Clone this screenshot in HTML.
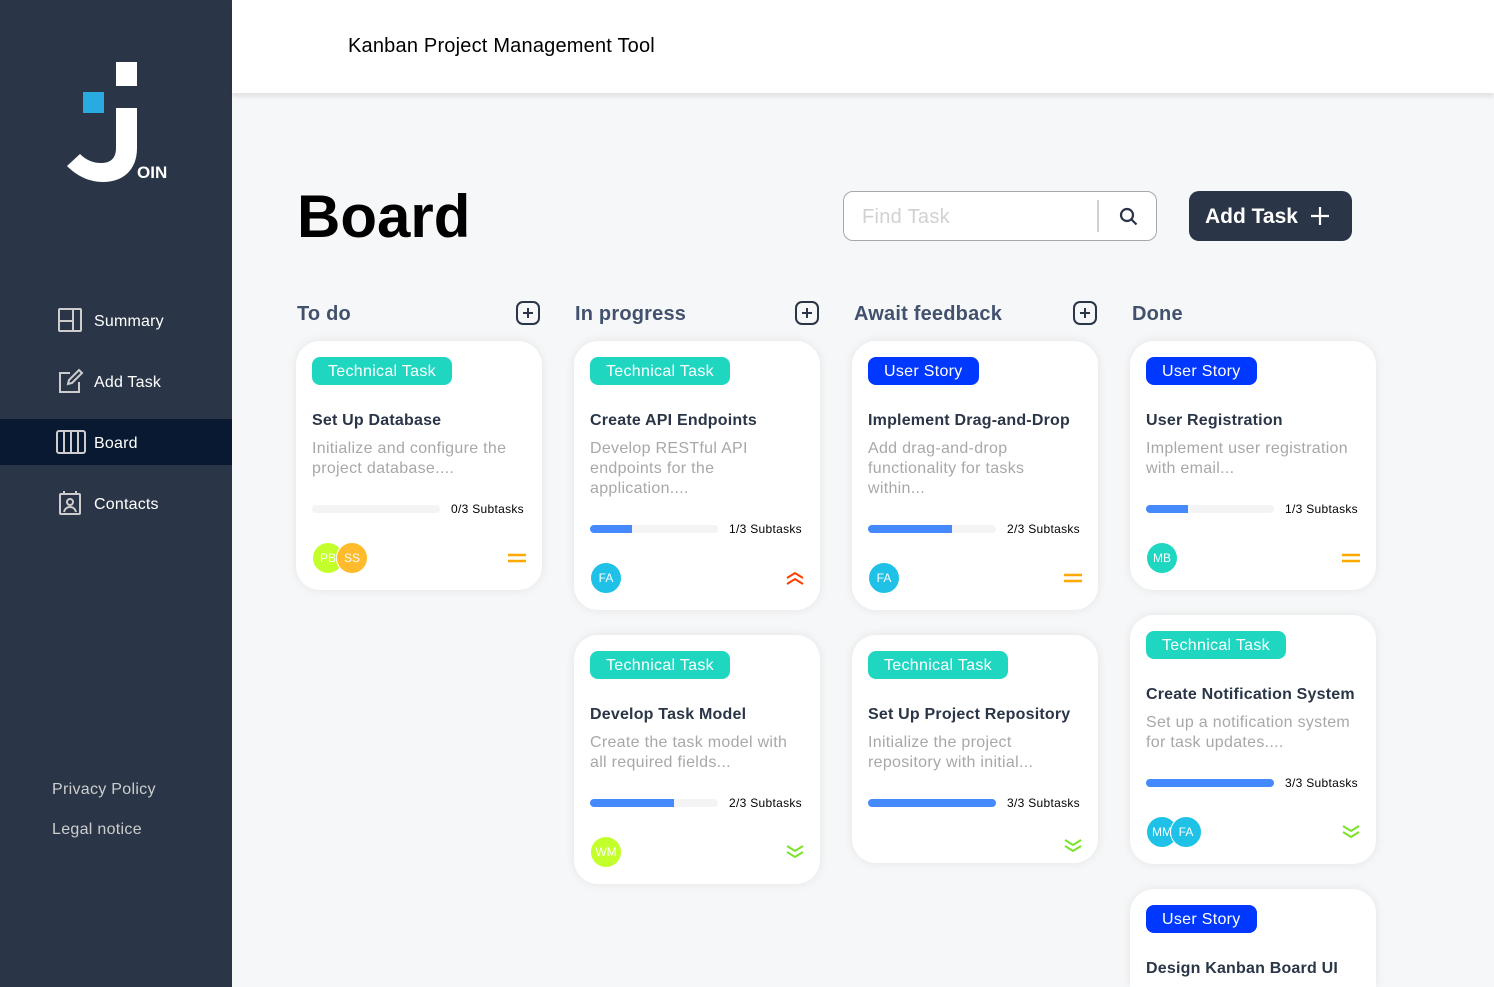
<!DOCTYPE html>
<html style="overflow:hidden;width:1494px;height:987px"><head><meta charset="utf-8"><style>
*{box-sizing:border-box;margin:0;padding:0}
body{width:1494px;height:987px;overflow:hidden;background:#f6f7f8;font-family:"Liberation Sans",sans-serif;position:relative}
.side{position:absolute;left:0;top:0;width:232px;height:987px;background:#2a3647}
.nav{position:absolute;left:0;width:232px;height:46px;display:flex;align-items:center;color:#fff;font-size:16px}
.nav svg{position:absolute;left:56px}
.nav span{position:absolute;left:94px;top:16px;letter-spacing:.2px}
.nav.act{background:#091931}
.foot{position:absolute;left:52px;color:#cdcdcd;font-size:16px;letter-spacing:.3px}
.top{position:absolute;left:232px;top:0;width:1262px;height:93px;background:#fff;box-shadow:0 4px 4px rgba(0,0,0,.08)}
.top span{position:absolute;left:116px;top:35px;font-size:20px;color:#000;letter-spacing:.2px}
h1{position:absolute;left:297px;top:182px;font-size:60px;font-weight:700;color:#000}
.search{position:absolute;left:843px;top:191px;width:314px;height:50px;border:1px solid #a8a8a8;border-radius:10px;background:#fff}
.search span{position:absolute;left:18px;top:14px;font-size:20px;color:#d1d1d1;letter-spacing:.3px}
.search i{position:absolute;left:253px;top:8px;width:2px;height:32px;background:#d1d1d1}
.btn{position:absolute;left:1189px;top:191px;width:163px;height:50px;background:#2a3647;border-radius:10px;color:#fff;font-size:21px;font-weight:700}
.btn span{position:absolute;left:16px;top:14px}
.colh{position:absolute;top:303px;font-size:20px;font-weight:700;color:#42526e;letter-spacing:.2px}
.plus{position:absolute;top:301px;width:24px;height:24px}
.card{position:absolute;width:246px;background:#fff;border-radius:24px;padding:16px;box-shadow:0 0 10px rgba(0,0,0,.08)}
.tag{display:inline-block;height:28px;line-height:30px;padding:0 16px;border-radius:8px;color:#fff;font-size:16px;letter-spacing:.3px}
.tt{background:#1fd7c1}.us{background:#0038ff}
.ti{margin-top:24px;padding-top:2px;height:20px;font-size:16px;font-weight:700;color:#2a3647;line-height:20px;letter-spacing:.2px;white-space:nowrap}
.de{margin-top:8px;padding-top:2px;font-size:16px;color:#a8a8a8;line-height:20px;letter-spacing:.3px;white-space:nowrap}
.pr{margin-top:22px;height:16px;display:flex;align-items:center}
.bar{width:128px;height:8px;border-radius:8px;background:#f4f4f4;overflow:hidden}
.bar b{display:block;height:8px;background:#4589ff}
.pr span{margin-left:11px;font-size:12px;color:#000;letter-spacing:.3px}
.ft{margin-top:25px;height:32px;display:flex;align-items:center;justify-content:space-between}
.av{display:flex}
.av i{width:32px;height:32px;border-radius:50%;color:#fff;font-size:12px;font-style:normal;display:flex;align-items:center;justify-content:center;border:1px solid #fff}
.av i+i{margin-left:-8px}
</style></head><body>
<div class="side">
<svg style="position:absolute;left:0;top:0" width="232" height="200">
<rect x="116" y="62" width="21" height="24" fill="#fff"/>
<rect x="83" y="92" width="21" height="21" fill="#29abe2"/>
<path d="M116 108h21v40c0 22-14 34-34 34c-14 0-26-6-36-16l13-12c6 6 13 9 21 9c10 0 15-5 15-15z" fill="#fff"/>
<text x="137" y="178" fill="#fff" font-size="17" font-weight="700" font-family="Liberation Sans">OIN</text>
</svg>
<div class="nav" style="top:297px"><svg width="28" height="28" viewBox="0 0 28 28" fill="none" stroke="#cdcdcd" stroke-width="2"><rect x="3" y="3" width="22" height="22" rx="1"/><path d="M17 3v22M3 15h14"/></svg><span>Summary</span></div>
<div class="nav" style="top:358px"><svg width="28" height="28" viewBox="0 0 28 28" fill="none" stroke="#cdcdcd" stroke-width="2"><path d="M14 6H4v19h19V15"/><path d="M12 17l1-4 10-10 3 3-10 10z"/></svg><span>Add Task</span></div>
<div class="nav act" style="top:419px"><svg width="30" height="28" viewBox="0 0 30 28" fill="none" stroke="#cdcdcd" stroke-width="2"><rect x="1" y="3" width="28" height="22" rx="2"/><path d="M8 3v22M15 3v22M22 3v22"/></svg><span>Board</span></div>
<div class="nav" style="top:480px"><svg width="28" height="28" viewBox="0 0 28 28" fill="none" stroke="#cdcdcd" stroke-width="2"><rect x="4" y="5" width="20" height="20" rx="1"/><path d="M8 2v4M20 2v4"/><circle cx="14" cy="13" r="3"/><path d="M8 23c1-4 4-5 6-5s5 1 6 5"/></svg><span>Contacts</span></div>
<div class="foot" style="top:781px">Privacy Policy</div>
<div class="foot" style="top:821px">Legal notice</div>
</div>
<div class="top"><span>Kanban Project Management Tool</span></div>
<h1>Board</h1>
<div class="search"><span>Find Task</span><i></i><svg style="position:absolute;left:274px;top:14px" width="22" height="22" viewBox="0 0 22 22" fill="none" stroke="#2a3647" stroke-width="2.2"><circle cx="9" cy="9" r="6"/><path d="M13.5 13.5l5 5"/></svg></div>
<div class="btn"><span>Add Task</span><svg style="position:absolute;left:121px;top:15px" width="20" height="20" viewBox="0 0 20 20" stroke="#fff" stroke-width="2.2"><path d="M10 1v18M1 10h18"/></svg></div>

<div class="colh" style="left:297px">To do</div>
<div class="colh" style="left:575px">In progress</div>
<div class="colh" style="left:854px">Await feedback</div>
<div class="colh" style="left:1132px">Done</div>
<svg class="plus" style="left:516px" viewBox="0 0 24 24" fill="none" stroke="#2a3647" stroke-width="2"><rect x="1" y="1" width="22" height="22" rx="6"/><path d="M12 7v10M7 12h10"/></svg>
<svg class="plus" style="left:795px" viewBox="0 0 24 24" fill="none" stroke="#2a3647" stroke-width="2"><rect x="1" y="1" width="22" height="22" rx="6"/><path d="M12 7v10M7 12h10"/></svg>
<svg class="plus" style="left:1073px" viewBox="0 0 24 24" fill="none" stroke="#2a3647" stroke-width="2"><rect x="1" y="1" width="22" height="22" rx="6"/><path d="M12 7v10M7 12h10"/></svg>

<div class="card" style="left:296px;top:341px"><span class="tag tt">Technical Task</span><div class="ti">Set Up Database</div><div class="de">Initialize and configure the<br>project database....</div><div class="pr"><div class="bar"><b style="width:0"></b></div><span>0/3 Subtasks</span></div><div class="ft"><div class="av"><i style="background:#c3ff2b">PB</i><i style="background:#ffbb2b">SS</i></div><svg width="18" height="10" viewBox="0 0 18 10" stroke="#ffa800" stroke-width="2.4"><path d="M0 2h18M0 8h18"/></svg></div></div>

<div class="card" style="left:574px;top:341px"><span class="tag tt">Technical Task</span><div class="ti">Create API Endpoints</div><div class="de">Develop RESTful API<br>endpoints for the<br>application....</div><div class="pr"><div class="bar"><b style="width:33%"></b></div><span>1/3 Subtasks</span></div><div class="ft"><div class="av"><i style="background:#1fc2e6">FA</i></div><svg width="18" height="14" viewBox="0 0 18 14" fill="none" stroke="#ff3d00" stroke-width="2"><path d="M1 7l8-5 8 5M1 13l8-5 8 5"/></svg></div></div>

<div class="card" style="left:852px;top:341px"><span class="tag us">User Story</span><div class="ti">Implement Drag-and-Drop</div><div class="de">Add drag-and-drop<br>functionality for tasks<br>within...</div><div class="pr"><div class="bar"><b style="width:66%"></b></div><span>2/3 Subtasks</span></div><div class="ft"><div class="av"><i style="background:#1fc2e6">FA</i></div><svg width="18" height="10" viewBox="0 0 18 10" stroke="#ffa800" stroke-width="2.4"><path d="M0 2h18M0 8h18"/></svg></div></div>

<div class="card" style="left:1130px;top:341px"><span class="tag us">User Story</span><div class="ti">User Registration</div><div class="de">Implement user registration<br>with email...</div><div class="pr"><div class="bar"><b style="width:33%"></b></div><span>1/3 Subtasks</span></div><div class="ft"><div class="av"><i style="background:#1fd7c1">MB</i></div><svg width="18" height="10" viewBox="0 0 18 10" stroke="#ffa800" stroke-width="2.4"><path d="M0 2h18M0 8h18"/></svg></div></div>

<div class="card" style="left:574px;top:635px"><span class="tag tt">Technical Task</span><div class="ti">Develop Task Model</div><div class="de">Create the task model with<br>all required fields...</div><div class="pr"><div class="bar"><b style="width:66%"></b></div><span>2/3 Subtasks</span></div><div class="ft"><div class="av"><i style="background:#c3ff2b">WM</i></div><svg width="18" height="14" viewBox="0 0 18 14" fill="none" stroke="#7ae229" stroke-width="2"><path d="M1 1l8 5 8-5M1 7l8 5 8-5"/></svg></div></div>

<div class="card" style="left:852px;top:635px;height:228px"><span class="tag tt">Technical Task</span><div class="ti">Set Up Project Repository</div><div class="de">Initialize the project<br>repository with initial...</div><div class="pr"><div class="bar"><b style="width:100%"></b></div><span>3/3 Subtasks</span></div><div class="ft" style="margin-top:19px"><div></div><svg width="18" height="14" viewBox="0 0 18 14" fill="none" stroke="#7ae229" stroke-width="2"><path d="M1 1l8 5 8-5M1 7l8 5 8-5"/></svg></div></div>

<div class="card" style="left:1130px;top:615px"><span class="tag tt">Technical Task</span><div class="ti">Create Notification System</div><div class="de">Set up a notification system<br>for task updates....</div><div class="pr"><div class="bar"><b style="width:100%"></b></div><span>3/3 Subtasks</span></div><div class="ft"><div class="av"><i style="background:#1fc2e6">MM</i><i style="background:#1fc2e6">FA</i></div><svg width="18" height="14" viewBox="0 0 18 14" fill="none" stroke="#7ae229" stroke-width="2"><path d="M1 1l8 5 8-5M1 7l8 5 8-5"/></svg></div></div>

<div class="card" style="left:1130px;top:889px;height:98px;border-radius:24px 24px 0 0"><span class="tag us">User Story</span><div class="ti">Design Kanban Board UI</div></div>
</body></html>
